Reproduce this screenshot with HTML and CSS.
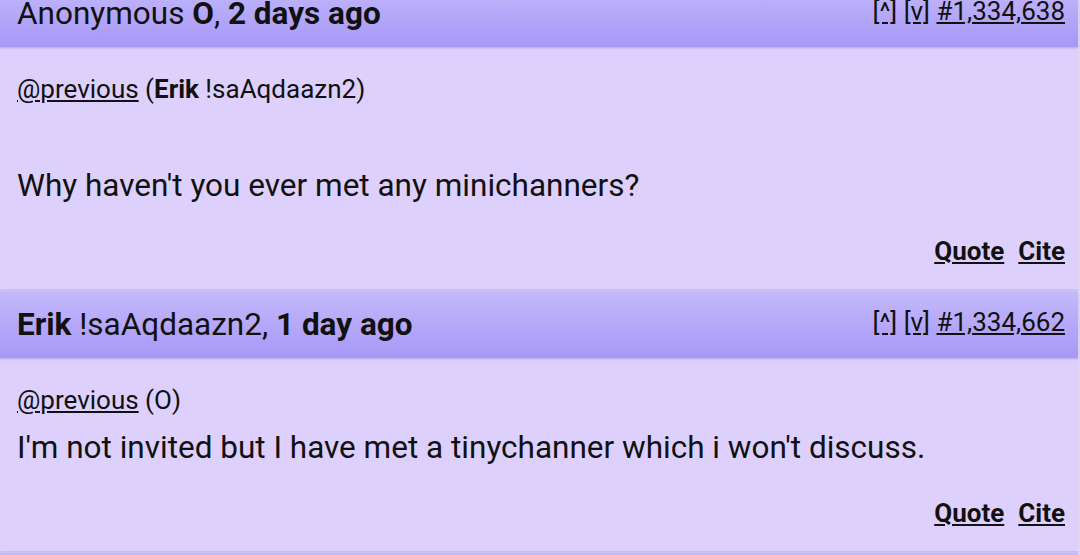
FILE: index.html
```html
<!DOCTYPE html>
<html lang="en">
<head>
<meta charset="utf-8">
<title>Thread</title>
<link rel="stylesheet" href="styles.css">
</head>
<body>
<div class="thread">
  <article class="post">
    <header class="post-head">
      <div class="who">Anonymous <b>O</b>, <b>2 days ago</b></div>
      <nav class="nav"><a href="#">[^]</a> <a href="#">[v]</a> <a href="#">#1,334,638</a></nav>
    </header>
    <div class="post-body">
      <div class="ref"><a href="#">@previous</a> (<b>Erik</b> !saAqdaazn2)</div>
      <div class="blank"></div>
      <p class="msg">Why haven't you ever met any minichanners?</p>
      <div class="actions"><a href="#">Quote</a><a href="#">Cite</a></div>
    </div>
  </article>
  <article class="post">
    <header class="post-head">
      <div class="who"><b>Erik</b> !saAqdaazn2, <b>1 day ago</b></div>
      <nav class="nav"><a href="#">[^]</a> <a href="#">[v]</a> <a href="#">#1,334,662</a></nav>
    </header>
    <div class="post-body">
      <div class="ref"><a href="#">@previous</a> (O)</div>
      <p class="msg">I'm not invited but I have met a tinychanner which i won't discuss.</p>
      <div class="actions"><a href="#">Quote</a><a href="#">Cite</a></div>
    </div>
  </article>
  <article class="post">
    <header class="post-head empty"></header>
  </article>
</div>
</body>
</html>
```

FILE: styles.css
```css
html, body {
  margin: 0;
  padding: 0;
  background: #ddd0fc;
  overflow: hidden;
  height: 555px;
}
body {
  font-family: Roboto, "Liberation Sans", sans-serif;
  color: #111;
}
a {
  color: #111;
  text-decoration: underline;
}
.thread {
  margin-top: -20px;
  display: flex;
  flex-direction: column;
  gap: 2px;
}
.post {
  background: #ddd0fc;
  box-shadow: 0 1px 2px rgba(60, 40, 140, 0.18), 1px 0 1px rgba(255, 255, 255, 0.5);
  margin-right: 2px;
}
.post-head {
  display: flex;
  justify-content: space-between;
  align-items: flex-start;
  padding: 20px 13px 19px 17px;
  background: linear-gradient(#c4b9fc, #a798f6);
  box-shadow: 0 1px 2px rgba(60, 40, 140, 0.25);
}
.post-head.empty {
  height: 28px;
}
.who {
  font-size: 31.5px;
  line-height: 28px;
}
.who b { font-weight: 700; }
.nav {
  font-size: 26px;
  line-height: 28px;
  margin-top: -3px;
}
.post-body {
  padding: 26px 13px 22px 17px;
}
.ref {
  font-size: 26px;
  line-height: 32px;
}
.blank {
  height: 49px;
}
.msg {
  margin: 14px 0 0;
  font-size: 31.5px;
  line-height: 36px;
}
.actions {
  margin-top: 31px;
  display: flex;
  justify-content: flex-end;
  gap: 14px;
  font-size: 26px;
  line-height: 32px;
  font-weight: 700;
}
```
